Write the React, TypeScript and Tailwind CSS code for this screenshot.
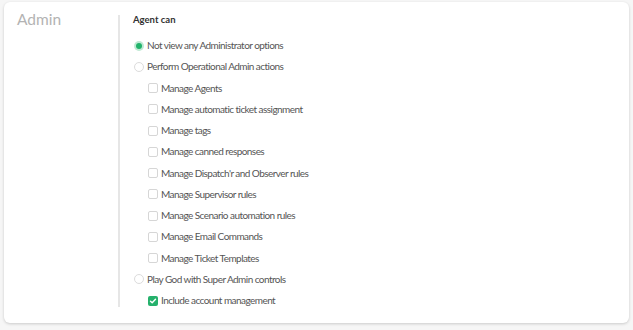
const ITEMS: { kind: 'radio' | 'check'; label: string; on?: boolean }[] = [
  { kind: 'radio', label: 'Not view any Administrator options', on: true },
  { kind: 'radio', label: 'Perform Operational Admin actions' },
  { kind: 'check', label: 'Manage Agents' },
  { kind: 'check', label: 'Manage automatic ticket assignment' },
  { kind: 'check', label: 'Manage tags' },
  { kind: 'check', label: 'Manage canned responses' },
  { kind: 'check', label: "Manage Dispatch'r and Observer rules" },
  { kind: 'check', label: 'Manage Supervisor rules' },
  { kind: 'check', label: 'Manage Scenario automation rules' },
  { kind: 'check', label: 'Manage Email Commands' },
  { kind: 'check', label: 'Manage Ticket Templates' },
  { kind: 'radio', label: 'Play God with Super Admin controls' },
  { kind: 'check', label: 'Include account management', on: true },
]

function Radio({ on }: { on?: boolean }) {
  if (on) {
    return (
      <span className="flex h-[10px] w-[10px] items-center justify-center rounded-full bg-[#bfe9d3]">
        <span className="h-[6px] w-[6px] rounded-full bg-[#21b36b]" />
      </span>
    )
  }
  return <span className="h-[10px] w-[10px] rounded-full border border-[#dcdcdc] bg-white" />
}

function Check({ on }: { on?: boolean }) {
  if (on) {
    return (
      <span className="flex h-[10px] w-[10px] items-center justify-center rounded-[2px] bg-[#25b16c]">
        <svg width="8" height="8" viewBox="0 0 8 8" fill="none">
          <path d="M1.5 4.2 3.2 5.8 6.5 2.3" stroke="white" strokeWidth="1.4" strokeLinecap="round" strokeLinejoin="round" />
        </svg>
      </span>
    )
  }
  return <span className="h-[10px] w-[10px] rounded-[2px] border border-[#d6d6d6] bg-white" />
}

export default function App() {
  return (
    <div className="h-[330px] w-[633px] bg-[#f6f6f6] pl-[4px] pt-[2px] font-['Lato',sans-serif]">
      <div className="flex h-[321px] w-[625px] rounded-[6px] bg-white pt-[13px] pb-[16px] shadow-[0_1px_3px_rgba(0,0,0,0.18)]">
        <div className="-mt-[4px] w-[114px] shrink-0 pl-[13px] text-[15.5px] leading-[16px] text-[#b3b3b3]">Admin</div>
        <div className="w-[2px] shrink-0 bg-[#e6e6e6]" />
        <div className="flex flex-col pl-[13px]">
          <div className="text-[9.5px] font-bold leading-[10px] text-[#333]">Agent can</div>
          <div className="mt-[10px] flex flex-col">
            {ITEMS.map((it) => (
              <div
                key={it.label}
                className={`flex h-[21.25px] items-center gap-[3px] text-[10px] tracking-[-0.55px] text-[#555] ${
                  it.kind === 'check' ? 'pl-[15px]' : 'pl-[1px]'
                }`}
              >
                {it.kind === 'radio' ? <Radio on={it.on} /> : <Check on={it.on} />}
                <span>{it.label}</span>
              </div>
            ))}
          </div>
        </div>
      </div>
    </div>
  )
}
